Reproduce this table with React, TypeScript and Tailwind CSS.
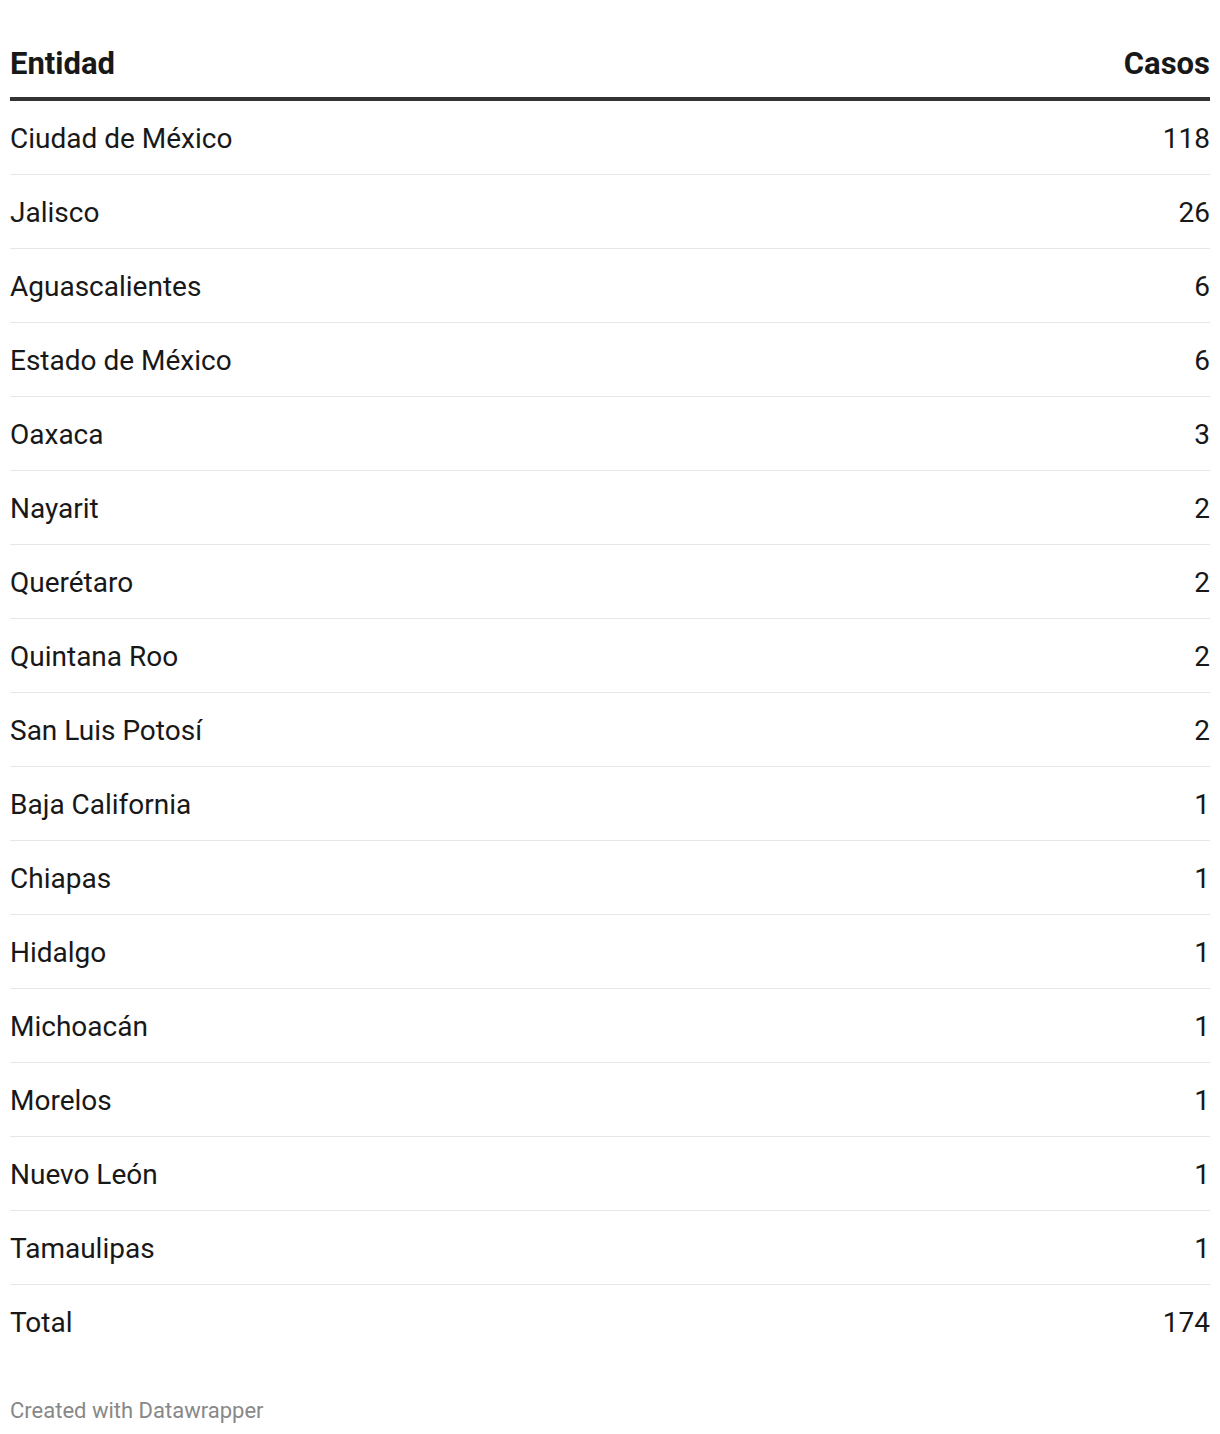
import React from "react";

const rows: [string, string][] = [
  ["Ciudad de México", "118"],
  ["Jalisco", "26"],
  ["Aguascalientes", "6"],
  ["Estado de México", "6"],
  ["Oaxaca", "3"],
  ["Nayarit", "2"],
  ["Querétaro", "2"],
  ["Quintana Roo", "2"],
  ["San Luis Potosí", "2"],
  ["Baja California", "1"],
  ["Chiapas", "1"],
  ["Hidalgo", "1"],
  ["Michoacán", "1"],
  ["Morelos", "1"],
  ["Nuevo León", "1"],
  ["Tamaulipas", "1"],
];

export default function App() {
  return (
    <div className="w-[1220px] bg-white px-[10px] font-['Roboto',sans-serif] text-[#181818]">
      <div className="flex h-[101px] items-center justify-between border-b-[4px] border-[#333333] pt-[31px] text-[31px] font-bold leading-[36px]">
        <span>Entidad</span>
        <span>Casos</span>
      </div>
      {rows.map(([name, n]) => (
        <div
          key={name}
          className="flex h-[74px] items-center justify-between border-b border-[#e6e6e6] pt-[2px] text-[28px] leading-[34px]"
        >
          <span>{name}</span>
          <span>{n}</span>
        </div>
      ))}
      <div className="flex h-[74px] items-center justify-between pt-[2px] text-[28px] leading-[34px]">
        <span>Total</span>
        <span>174</span>
      </div>
      <div className="flex h-[102px] items-center pt-[1px] text-[22px] text-[#888888]">
        Created with Datawrapper
      </div>
    </div>
  );
}
